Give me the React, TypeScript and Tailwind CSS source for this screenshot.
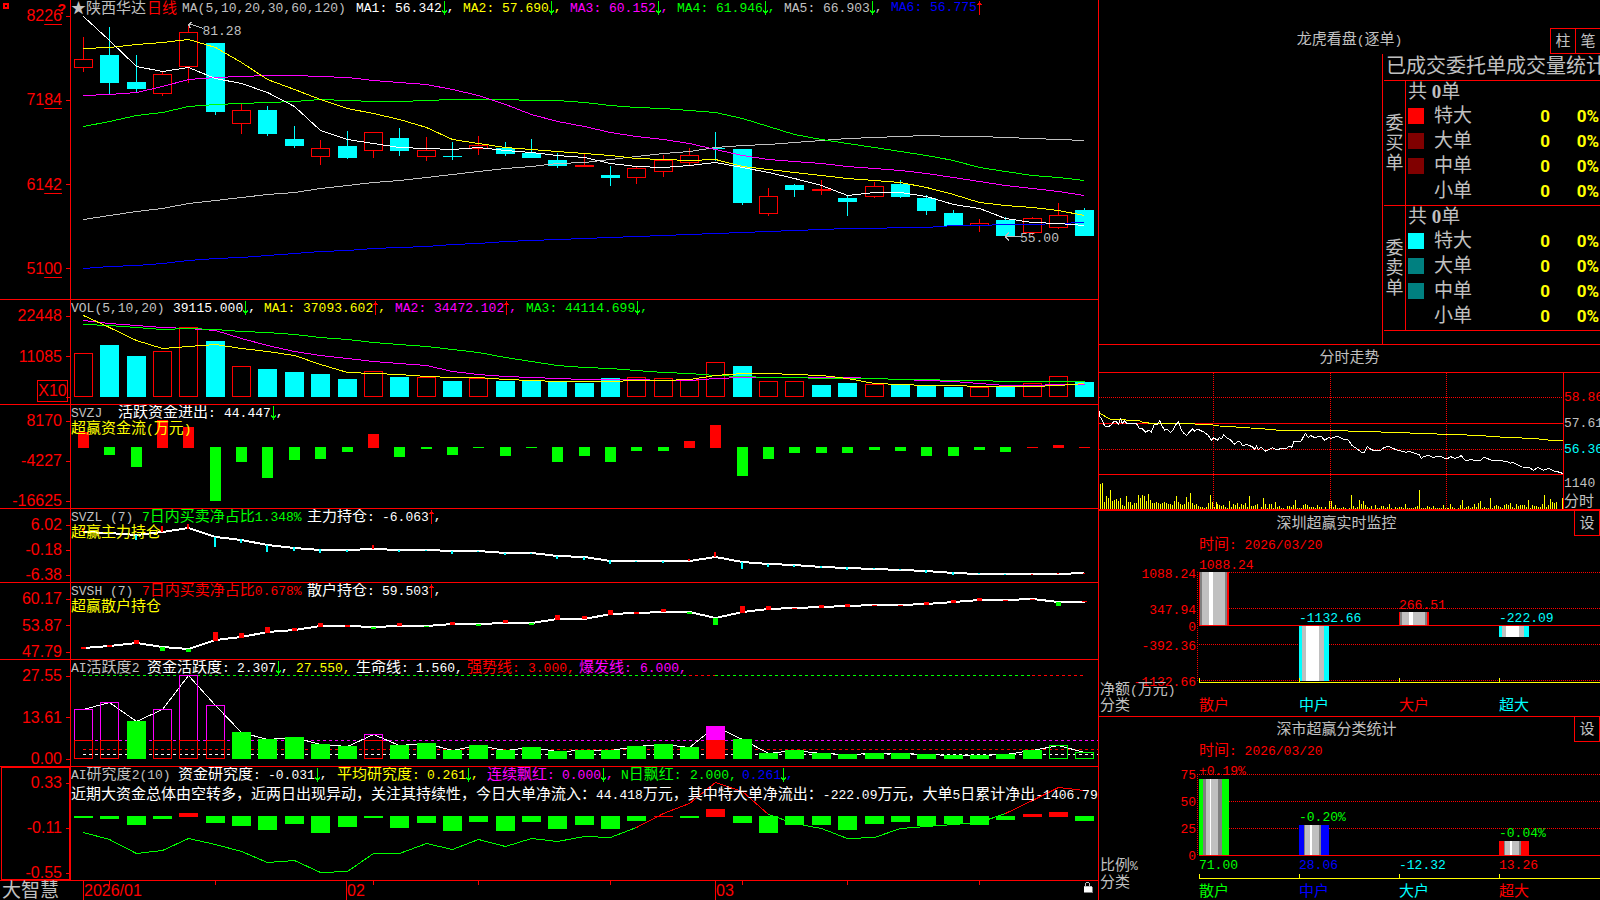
import React from 'react';

const RED = '#ff0000';
const CYAN = '#00ffff';
const GREEN = '#00ff00';
const YELLOW = '#ffff00';
const MAGENTA = '#ff00ff';
const BLUE = '#0000ff';
const GRAY = '#c0c0c0';
const WHITE = '#ffffff';

// r = up day (outlined), c = down day (filled)
type Candle = ['r' | 'c', number, number, number, number];

const candles: Candle[] = [
  ['r', 37, 59, 67, 71], ['c', 27, 55, 82, 93], ['c', 55, 82, 88, 91], ['r', 72, 74, 93, 95],
  ['r', 25, 32, 66, 82], ['c', 43, 43, 111, 114], ['r', 103, 110, 123, 133], ['c', 106, 110, 133, 135],
  ['c', 126, 139, 145, 147], ['r', 140, 148, 156, 164], ['c', 131, 146, 157, 158], ['r', 132, 132, 150, 157],
  ['c', 128, 138, 150, 155], ['r', 137, 150, 156, 160], ['c', 142, 156, 156, 159], ['r', 136, 145, 148, 154],
  ['c', 142, 148, 153, 155], ['c', 139, 153, 157, 157], ['c', 153, 160, 165, 167], ['r', 153, 165, 166, 166],
  ['c', 166, 175, 177, 185], ['r', 167, 168, 177, 183], ['r', 155, 160, 171, 176], ['r', 148, 155, 162, 164],
  ['c', 132, 148, 148, 160], ['c', 149, 149, 202, 204], ['r', 188, 196, 213, 215], ['c', 184, 185, 189, 196],
  ['r', 180, 189, 190, 194], ['c', 196, 198, 201, 215], ['r', 182, 186, 196, 197], ['c', 180, 184, 196, 197],
  ['c', 195, 198, 210, 214], ['c', 210, 213, 225, 225], ['r', 219, 223, 225, 231], ['c', 217, 220, 235, 235],
  ['r', 217, 218, 232, 234], ['r', 203, 215, 227, 228], ['c', 208, 210, 235, 235],
];

const priceLines: { color: string; ys: number[] }[] = [
  { color: BLUE, ys: [268, 266, 265, 263, 260, 258, 257, 255, 253, 251, 250, 248, 247, 246, 244, 243, 241, 240, 239, 238, 237, 236, 235, 234, 233, 232, 231, 230, 229, 228, 228, 227, 227, 225, 225, 224, 224, 223, 222] },
  { color: GRAY, ys: [219, 215, 211, 208, 203, 200, 197, 194, 192, 188, 185, 182, 180, 177, 174, 171, 168, 166, 163, 162, 159, 156, 153, 151, 147, 145, 144, 142, 140, 138, 137, 136, 135, 136, 136, 137, 138, 139, 140] },
  { color: GREEN, ys: [126, 121, 115, 112, 106, 104, 103, 102, 101, 99, 100, 101, 101, 100, 99, 99, 99, 100, 100, 102, 105, 107, 108, 110, 112, 118, 126, 134, 139, 143, 147, 151, 155, 160, 167, 171, 175, 177, 180] },
  { color: MAGENTA, ys: [95, 94, 92, 86, 79, 77, 76, 75, 75, 76, 77, 80, 82, 84, 89, 95, 104, 114, 121, 126, 132, 136, 139, 143, 149, 155, 159, 161, 163, 166, 168, 170, 173, 177, 181, 185, 188, 191, 195] },
  { color: YELLOW, ys: [48, 47, 44, 42, 39, 47, 62, 79, 89, 99, 108, 113, 119, 127, 139, 143, 147, 149, 151, 153, 155, 158, 159, 160, 159, 166, 169, 172, 175, 178, 180, 182, 187, 194, 202, 205, 207, 210, 215] },
  { color: WHITE, ys: [16, 40, 66, 71, 67, 78, 83, 92, 106, 130, 139, 143, 147, 148, 149, 147, 150, 152, 155, 157, 163, 166, 167, 165, 162, 167, 172, 178, 185, 195, 192, 192, 196, 204, 208, 218, 222, 223, 225] },
];

const volumes: [string, number][] = [
  ['r', 353], ['c', 345], ['c', 356], ['r', 351], ['r', 327], ['c', 341], ['r', 366], ['c', 369], ['c', 372], ['c', 374],
  ['c', 379], ['r', 371], ['c', 377], ['r', 377], ['c', 381], ['r', 378], ['c', 381], ['c', 380], ['c', 382], ['c', 383],
  ['c', 378], ['r', 377], ['r', 378], ['r', 380], ['r', 362], ['c', 366], ['r', 381], ['r', 381], ['c', 385], ['c', 383],
  ['r', 384], ['c', 385], ['c', 386], ['c', 387], ['r', 387], ['c', 387], ['r', 383], ['r', 376], ['c', 382],
];

const volumeLines: { color: string; ys: number[] }[] = [
  { color: MAGENTA, ys: [320, 323, 325, 327, 328, 330, 338, 345, 351, 355, 358, 361, 363, 365, 371, 374, 376, 377, 378, 379, 379, 379, 380, 380, 378, 377, 377, 377, 377, 377, 378, 379, 380, 381, 383, 385, 385, 384, 384] },
  { color: GREEN, ys: [324, 325, 327, 329, 328, 329, 331, 332, 334, 337, 339, 342, 344, 346, 349, 352, 357, 361, 365, 367, 368, 370, 372, 373, 375, 376, 377, 377, 378, 378, 378, 379, 379, 380, 380, 381, 381, 381, 381] },
  { color: YELLOW, ys: [315, 327, 340, 348, 346, 344, 348, 351, 355, 364, 372, 373, 374, 376, 377, 377, 379, 380, 381, 381, 381, 380, 380, 379, 375, 373, 373, 374, 375, 378, 383, 384, 385, 385, 386, 386, 386, 385, 383] },
];

// negative flow grows down to the given y, positive grows up
const flows: [string, number][] = [
  ['r', 432], ['g', 455], ['g', 467], ['r', 420], ['r', 427], ['g', 501], ['g', 462], ['g', 478], ['g', 460], ['g', 459],
  ['g', 452], ['r', 434], ['g', 457], ['g', 449], ['g', 455], ['g', 448], ['g', 456], ['g', 448], ['g', 462], ['g', 456],
  ['g', 462], ['g', 451], ['g', 451], ['r', 441], ['r', 425], ['g', 476], ['g', 459], ['g', 453], ['g', 453], ['g', 453],
  ['g', 450], ['g', 451], ['g', 456], ['g', 456], ['g', 450], ['g', 452], ['r', 447], ['r', 445], ['r', 447],
];

const mainHold = [532, 533, 535, 532, 528, 537, 540, 545, 548, 550, 550, 549, 550, 550, 551, 551, 553, 553, 556, 557, 561, 561, 561, 561, 557, 562, 564, 565, 567, 568, 569, 570, 571, 573, 574, 574, 574, 574, 573];
const mainMarks: [string, number, number][] = [
  ['r', 528, 532], ['c', 532, 534], ['c', 535, 540], ['r', 526, 532], ['r', 524, 529], ['c', 537, 547], ['c', 539, 543], ['c', 545, 552], ['c', 547, 551], ['c', 549, 553],
  ['c', 550, 552], ['r', 545, 549], ['c', 550, 552], ['c', 550, 551], ['c', 551, 554], ['c', 551, 552], ['c', 553, 555], ['c', 553, 554], ['c', 556, 559], ['c', 557, 560],
  ['c', 560, 564], ['c', 561, 562], ['c', 561, 563], ['r', 559, 561], ['r', 552, 557], ['c', 562, 569], ['c', 564, 567], ['c', 565, 567], ['c', 566, 568], ['c', 567, 570],
  ['c', 568, 569], ['c', 569, 570], ['c', 570, 573], ['c', 572, 575], ['c', 573, 574], ['c', 574, 575], ['r', 574, 575], ['r', 573, 574], ['r', 573, 574],
];

const retailHold = [648, 646, 643, 647, 649, 640, 637, 632, 630, 626, 626, 627, 626, 626, 624, 624, 623, 623, 619, 619, 614, 613, 612, 612, 618, 612, 609, 608, 607, 606, 605, 605, 604, 602, 600, 600, 599, 602, 602];
const retailMarks: [string, number, number][] = [
  ['r', 647, 649], ['r', 645, 647], ['r', 640, 644], ['g', 647, 651], ['g', 649, 652], ['r', 632, 641], ['r', 633, 638], ['r', 627, 633], ['r', 628, 631], ['r', 623, 627],
  ['r', 625, 627], ['g', 627, 629], ['r', 623, 626], ['g', 626, 627], ['r', 622, 625], ['g', 624, 626], ['r', 620, 623], ['g', 623, 625], ['r', 615, 620], ['r', 616, 619],
  ['r', 610, 615], ['r', 612, 614], ['r', 609, 612], ['g', 612, 614], ['g', 618, 625], ['r', 606, 613], ['r', 606, 610], ['r', 608, 609], ['r', 605, 608], ['r', 604, 607],
  ['r', 605, 606], ['r', 605, 606], ['r', 602, 605], ['r', 600, 603], ['r', 598, 601], ['r', 600, 601], ['r', 599, 600], ['g', 602, 606], ['r', 601, 602],
];

// m = burst bar, M = solid burst bar, g = normal, o = outlined
const activity: [string, number][] = [
  ['m', 709], ['m', 702], ['g', 721], ['m', 709], ['m', 675], ['m', 705], ['g', 732], ['g', 739], ['g', 737], ['g', 744],
  ['g', 746], ['m', 734], ['g', 745], ['g', 743], ['g', 750], ['g', 745], ['g', 750], ['g', 747], ['g', 751], ['g', 750],
  ['g', 750], ['g', 746], ['g', 744], ['g', 747], ['M', 726], ['g', 739], ['g', 753], ['g', 750], ['g', 753], ['g', 754],
  ['g', 753], ['g', 753], ['g', 754], ['g', 755], ['g', 755], ['g', 754], ['g', 750], ['o', 745], ['o', 752],
];

const research: [string, number][] = [
  ['g', 818], ['g', 819], ['g', 825], ['g', 819], ['r', 813], ['g', 823], ['g', 826], ['g', 830], ['g', 824], ['g', 833],
  ['g', 827], ['g', 818], ['g', 828], ['g', 823], ['g', 831], ['g', 822], ['g', 831], ['g', 822], ['g', 829], ['g', 825],
  ['g', 829], ['g', 821], ['r', 816], ['g', 818], ['r', 809], ['g', 823], ['g', 833], ['g', 825], ['g', 825], ['g', 830],
  ['g', 824], ['g', 822], ['g', 826], ['g', 824], ['g', 825], ['g', 820], ['r', 814], ['r', 812], ['g', 821],
];
const researchLine = [832, 839, 853, 850, 838, 844, 851, 862, 860, 872, 871, 853, 853, 843, 849, 839, 846, 838, 841, 836, 837, 827, 813, 803, 782, 791, 814, 823, 828, 838, 837, 828, 826, 824, 822, 813, 800, 787, 790];

// intraday series, measured in thirds of a pixel
const minutePrice = [
  9, 124, 12, 140, 18, 150, 26, 168, 38, 170, 45, 165, 52, 156, 60, 155, 68, 162, 73, 146, 79, 160, 85, 152, 92, 160, 122, 162, 130, 175, 140, 177, 149, 187,
  158, 181, 166, 186, 175, 163, 184, 163, 191, 152, 198, 168, 206, 180, 212, 177, 223, 187, 230, 182, 238, 166, 248, 156, 256, 180, 264, 190, 272, 196, 282, 184,
  290, 176, 296, 184, 304, 177, 325, 187, 336, 195, 346, 210, 353, 203, 364, 211, 370, 203, 377, 206, 383, 194, 392, 203, 402, 208, 415, 223, 425, 214, 432, 215,
  440, 227, 452, 223, 468, 230, 476, 238, 481, 228, 487, 238, 496, 232, 509, 244, 530, 233, 540, 238, 572, 235, 580, 228, 587, 232, 594, 214, 615, 214, 628, 190,
  637, 203, 644, 197, 655, 202, 676, 199, 686, 211, 697, 203, 705, 205, 714, 202, 726, 199, 742, 208, 757, 210, 768, 226, 797, 247, 805, 247, 814, 229, 822, 236,
  835, 243, 854, 241, 864, 233, 878, 229, 902, 240, 930, 247, 940, 244, 970, 254, 976, 265, 985, 259, 997, 256, 1009, 262, 1034, 259, 1047, 266, 1056, 265,
  1064, 260, 1076, 265, 1088, 262, 1096, 256, 1102, 266, 1110, 272, 1127, 268, 1134, 271, 1152, 273, 1163, 262, 1186, 270, 1232, 274, 1243, 280, 1249, 277,
  1279, 291, 1299, 292, 1313, 301, 1326, 292, 1342, 301, 1359, 295, 1374, 303, 1392, 307, 1401, 311,
];
const minuteAverage = [
  9, 127, 20, 135, 44, 148, 90, 150, 128, 152, 142, 157, 165, 160, 262, 160, 350, 165, 370, 168, 420, 171, 506, 177, 550, 181, 708, 181, 801, 185, 907, 187,
  974, 191, 1072, 193, 1154, 197, 1212, 201, 1278, 204, 1329, 207, 1364, 211, 1401, 212,
];
const minuteVolume = [
  25, 26, 7, 13, 11, 19, 8, 9, 10, 8, 11, 4, 3, 13, 7, 7, 4, 6, 6, 14, 11, 14, 13, 8, 15, 9, 6, 6, 7, 6, 5, 6, 7, 6, 5, 5, 4, 8, 13, 7, 5, 4, 5, 12, 7, 16, 6, 4, 5, 3,
  2, 2, 1, 2, 6, 14, 7, 2, 7, 5, 4, 3, 4, 2, 1, 8, 2, 5, 4, 6, 2, 5, 4, 6, 2, 13, 3, 3, 4, 5, 0, 2, 11, 5, 1, 5, 5, 1, 7, 2, 3, 1, 1, 0, 3, 3, 2, 4, 9, 1, 1, 1, 4, 5, 4,
  2, 2, 2, 1, 4, 2, 2, 0, 2, 0, 8, 8, 2, 4, 1, 1, 1, 2, 1, 0, 1, 14, 3, 1, 2, 9, 5, 8, 4, 2, 1, 3, 0, 4, 1, 1, 3, 3, 1, 2, 5, 1, 0, 2, 1, 2, 2, 1, 5, 1, 1, 1, 1, 2, 3,
  19, 1, 1, 1, 3, 2, 1, 3, 1, 1, 1, 1, 4, 1, 1, 1, 5, 2, 1, 0, 1, 4, 9, 1, 2, 3, 1, 2, 5, 2, 6, 8, 1, 2, 1, 1, 11, 1, 3, 4, 3, 2, 1, 4, 5, 4, 6, 2, 1, 5, 3, 4, 4, 4,
  2, 9, 1, 4, 3, 3, 2, 2, 5, 14, 2, 4, 10, 7, 6, 7, 0, 0, 11,
];

const cx = (i: number) => Math.round(83 + i * 26.35);

const barColor = (kind: string) => (kind === 'r' ? RED : kind === 'c' ? CYAN : GREEN);

// Lienzo de cada indicador: comparte el eje x con los demás
const Plot: React.FC<{ top: number; height: number; children: React.ReactNode }> = ({ top, height, children }) => (
  <svg
    className="absolute inset-0 h-full w-full"
    viewBox={`71 ${top} 1027 ${height}`}
    preserveAspectRatio="none"
    shapeRendering="crispEdges"
    aria-hidden="true"
  >
    {children}
  </svg>
);

const Series: React.FC<{ ys: number[]; color: string; from?: number; width?: number }> = ({ ys, color, from = 0, width = 1 }) => (
  <polyline
    points={ys.map((y, i) => `${cx(i + from) + 0.5},${y + (width === 1 ? 0.5 : 0)}`).join(' ')}
    fill="none"
    stroke={color}
    strokeWidth={width}
  />
);

const Box: React.FC<{ i: number; top: number; bottom: number; color: string; solid?: boolean }> = ({ i, top, bottom, color, solid }) =>
  solid ? (
    <rect x={cx(i) - 9} y={top} width={19} height={Math.max(1, bottom - top)} fill={color} />
  ) : (
    <rect x={cx(i) - 8.5} y={top + 0.5} width={18} height={Math.max(1, bottom - top - 1)} fill="none" stroke={color} />
  );

const Arrow: React.FC<{ up?: boolean }> = ({ up }) => (
  <svg className="h-[14px] w-[5px] shrink-0" viewBox="0 0 5 14" shapeRendering="crispEdges" aria-hidden="true">
    <path
      d={up ? 'M2 0h1v14h-1zM1 2h3v1h-3zM0 3h5v1h-5z' : 'M2 0h1v14h-1zM0 9h1v1h3v-1h1v2h-1v1h-3v-1h-1z'}
      fill={up ? RED : GREEN}
    />
  </svg>
);

// Las cifras y letras latinas van en monoespaciada, el resto en la fuente china
const Mixed: React.FC<{ text: string }> = ({ text }) => (
  <>
    {text.split(/([\x20-\x7e]+)/).map((part, i) =>
      i % 2 === 1 ? (
        <span key={i} className="whitespace-pre font-['Liberation_Mono'] text-[13px]">
          {part}
        </span>
      ) : (
        part
      ),
    )}
  </>
);

interface LegendItem {
  text: string;
  className: string;
  arrow?: 'up' | 'down';
}

const Legend: React.FC<{ items: LegendItem[] }> = ({ items }) => (
  <div className="flex h-[16px] items-center whitespace-nowrap text-[15px] leading-[16px]">
    {items.map((item) => (
      <div key={item.text} className={`flex shrink-0 items-center ${item.className}`}>
        <span>
          <Mixed text={item.text} />
        </span>
        {item.arrow && (
          <>
            <Arrow up={item.arrow === 'up'} />
            <Mixed text="," />
          </>
        )}
      </div>
    ))}
  </div>
);

interface PanelProps {
  labels: React.ReactNode[];
  gutterClass?: string;
  extra?: React.ReactNode;
  children: React.ReactNode;
}

const Panel: React.FC<PanelProps> = ({ labels, gutterClass = 'pb-0', extra, children }) => (
  <section className="flex min-h-0 border-b border-[#ff0000]">
    <div className={`relative flex w-[71px] shrink-0 flex-col justify-between border-r border-[#ff0000] pt-[9px] font-['Liberation_Sans'] text-[16px] leading-[14px] text-[#ff0000] ${gutterClass}`}>
      {labels.map((label, i) => (
        <div key={i} className="flex h-[14px] items-center justify-end gap-1">
          <span>{label}</span>
          <span className="h-px w-1 bg-[#ff0000]" />
        </div>
      ))}
      {extra}
    </div>
    <div className="relative min-w-0 flex-1 overflow-hidden">{children}</div>
  </section>
);

const Price: React.FC<{ value: string }> = ({ value }) => (
  <>
    {value.slice(0, 2)}
    <span className="underline decoration-1 underline-offset-[3px]">{value.slice(2)}</span>
  </>
);

const PricePanel = () => (
  <Panel
    gutterClass="pb-[23px]"
    labels={['8226', '7184', '6142', '5100'].map((v) => <Price key={v} value={v} />)}
    extra={
      <>
        <span className="absolute left-[3px] top-[3px] h-[6px] w-[6px] border-2 border-[#ff0000]" />
        <span className="absolute right-[4px] top-[2px] text-[14px] font-bold">?</span>
      </>
    }
  >
    <Plot top={0} height={299}>
      {candles.map(([kind, high, top, bottom, low], i) => (
        <g key={i}>
          <rect x={cx(i)} y={high} width={1} height={top - high} fill={barColor(kind)} />
          <rect x={cx(i)} y={bottom} width={1} height={low - bottom + 1} fill={barColor(kind)} />
          <Box i={i} top={top} bottom={bottom + 1} color={barColor(kind)} solid={kind === 'c'} />
        </g>
      ))}
      {priceLines.map((line) => (
        <Series key={line.color} ys={line.ys} color={line.color} />
      ))}
      <path d="M189 24.5h3l11 4M188.5 24.5l4-3M188.5 24.5l2 4M1005.5 236.5h15M1005 236.5l4-4M1005 236.5l4 4" fill="none" stroke={GRAY} />
    </Plot>
    <span className="absolute left-[12.8%] top-[7.1%] text-[15px] leading-[18px] text-[#c0c0c0]">
      <Mixed text="81.28" />
    </span>
    <span className="absolute left-[92.4%] top-[76.3%] text-[15px] leading-[18px] text-[#c0c0c0]">
      <Mixed text="55.00" />
    </span>
    <div className="relative">
      <Legend
        items={[
          { text: '★陕西华达', className: 'w-[76px] text-[#c0c0c0]' },
          { text: '日线', className: 'w-[35px] text-[#ff0000]' },
          { text: 'MA(5,10,20,30,60,120)', className: 'w-[174px] text-[#c0c0c0]' },
          { text: 'MA1: 56.342', className: 'w-[107px] text-white', arrow: 'down' },
          { text: 'MA2: 57.690', className: 'w-[107px] text-[#ffff00]', arrow: 'down' },
          { text: 'MA3: 60.152', className: 'w-[107px] text-[#ff00ff]', arrow: 'down' },
          { text: 'MA4: 61.946', className: 'w-[107px] text-[#00ff00]', arrow: 'down' },
          { text: 'MA5: 66.903', className: 'w-[107px] text-[#c0c0c0]', arrow: 'down' },
        ]}
      />
      <div className="absolute left-[820px] top-0 flex h-[16px] items-center text-[15px] leading-[16px] text-[#0000ff]">
        <Mixed text="MA6: 56.775" />
        <Arrow up />
      </div>
    </div>
  </Panel>
);

const VolumePanel = () => (
  <Panel
    labels={['22448', '11085', '']}
    extra={
      <span className="absolute bottom-[2px] right-[2px] flex h-[22px] w-[31px] items-center justify-center border border-[#ff0000]">X10</span>
    }
  >
    <Plot top={300} height={104}>
      {volumes.map(([kind, top], i) => (
        <Box key={i} i={i} top={top} bottom={397} color={barColor(kind)} solid={kind === 'c'} />
      ))}
      {volumeLines.map((line) => (
        <Series key={line.color} ys={line.ys} color={line.color} />
      ))}
    </Plot>
    <div className="relative">
      <Legend
        items={[
          { text: 'VOL(5,10,20)', className: 'w-[102px] text-[#c0c0c0]' },
          { text: '39115.000', className: 'w-[91px] text-white', arrow: 'down' },
          { text: 'MA1: 37093.602', className: 'w-[131px] text-[#ffff00]', arrow: 'up' },
          { text: 'MA2: 34472.102', className: 'w-[131px] text-[#ff00ff]', arrow: 'up' },
          { text: 'MA3: 44114.699', className: 'text-[#00ff00]', arrow: 'down' },
        ]}
      />
    </div>
  </Panel>
);

const FlowPanel = () => (
  <Panel labels={['8170', '-4227', '-16625']}>
    <Plot top={405} height={103}>
      {flows.map(([kind, y], i) => (
        <rect
          key={i}
          x={cx(i) - 5}
          y={kind === 'r' ? y : 447}
          width={11}
          height={kind === 'r' ? 448 - y : y - 447}
          fill={barColor(kind)}
        />
      ))}
    </Plot>
    <div className="relative">
      <Legend
        items={[
          { text: 'SVZJ', className: 'w-[47px] text-[#c0c0c0]' },
          { text: '活跃资金进出:', className: 'w-[106px] text-white' },
          { text: '44.447', className: 'text-white', arrow: 'down' },
        ]}
      />
      <p className="text-[15px] leading-[15px] text-[#ffff00]">
        <Mixed text="超赢资金流(万元)" />
      </p>
    </div>
  </Panel>
);

const MainHoldPanel = () => (
  <Panel labels={['6.02', '-0.18', '-6.38']}>
    <Plot top={509} height={73}>
      <Series ys={mainHold} color={WHITE} width={2} />
      {mainMarks.map(([kind, top, bottom], i) => (
        <rect key={i} x={cx(i) - 1} y={top} width={2} height={bottom - top} fill={barColor(kind)} />
      ))}
    </Plot>
    <div className="relative">
      <Legend
        items={[
          { text: 'SVZL (7)', className: 'w-[71px] text-[#c0c0c0]' },
          { text: '7日内买卖净占比1.348%', className: 'w-[165px] text-[#00ff00]' },
          { text: '主力持仓:', className: 'w-[75px] text-white' },
          { text: '-6.063', className: 'text-white', arrow: 'up' },
        ]}
      />
      <p className="text-[15px] leading-[15px] text-[#ffff00]">超赢主力持仓</p>
    </div>
  </Panel>
);

const RetailHoldPanel = () => (
  <Panel labels={['60.17', '53.87', '47.79']}>
    <Plot top={583} height={76}>
      <Series ys={retailHold} color={WHITE} width={2} />
      {retailMarks.map(([kind, top, bottom], i) => (
        <rect key={i} x={cx(i) - 2} y={top} width={5} height={bottom - top} fill={barColor(kind)} />
      ))}
    </Plot>
    <div className="relative">
      <Legend
        items={[
          { text: 'SVSH (7)', className: 'w-[71px] text-[#c0c0c0]' },
          { text: '7日内买卖净占比0.678%', className: 'w-[165px] text-[#ff0000]' },
          { text: '散户持仓:', className: 'w-[75px] text-white' },
          { text: '59.503', className: 'text-white', arrow: 'up' },
        ]}
      />
      <p className="text-[15px] leading-[15px] text-[#ffff00]">超赢散户持仓</p>
    </div>
  </Panel>
);

const ActivityPanel = () => (
  <Panel labels={['27.55', '13.61', '0.00']}>
    <Plot top={660} height={106}>
      <g fill="none" strokeDasharray="3 3">
        <path d="M83 675.5H686" stroke={GREEN} />
        <path d="M689 675.5H715" stroke={RED} />
        <path d="M715 675.5H1032" stroke={GREEN} />
        <path d="M1032 675.5H1084" stroke={RED} />
        <path d="M83 740.5H1098" stroke={MAGENTA} />
        <path d="M83 749.5H1098" stroke={RED} />
        <path d="M83 754.5H1098" stroke={WHITE} />
      </g>
      <Series ys={activity.map(([, top]) => top)} color={WHITE} />
      {activity.map(([kind, top], i) => {
        if (kind === 'm' || kind === 'M') {
          const solid = kind === 'M';
          return (
            <g key={i}>
              <Box i={i} top={top} bottom={741} color={MAGENTA} solid={solid} />
              <Box i={i} top={740} bottom={759} color={RED} solid={solid} />
            </g>
          );
        }
        return <Box key={i} i={i} top={top} bottom={759} color={GREEN} solid={kind === 'g'} />;
      })}
    </Plot>
    <div className="relative">
      <Legend
        items={[
          { text: 'AI活跃度2', className: 'w-[76px] text-[#c0c0c0]' },
          { text: '资金活跃度:', className: 'w-[90px] text-white' },
          { text: '2.307', className: 'w-[59px] text-white', arrow: 'down' },
          { text: '27.550,', className: 'w-[60px] text-[#ffff00]' },
          { text: '生命线:', className: 'w-[60px] text-white' },
          { text: '1.560,', className: 'w-[51px] text-white' },
          { text: '强势线:', className: 'w-[61px] text-[#ff0000]' },
          { text: '3.000,', className: 'w-[51px] text-[#ff0000]' },
          { text: '爆发线:', className: 'w-[61px] text-[#ff00ff]' },
          { text: '6.000,', className: 'text-[#ff00ff]' },
        ]}
      />
    </div>
  </Panel>
);

const ResearchPanel = () => (
  <Panel
    labels={['0.33', '-0.11', '-0.55']}
    extra={<span className="absolute inset-y-0 left-px right-0 border border-[#ff0000]" />}
  >
    <Plot top={767} height={113}>
      {research.map(([kind, y], i) => (
        <Box
          key={i}
          i={i}
          top={kind === 'r' ? y : 816}
          bottom={kind === 'r' ? 817 : y}
          color={barColor(kind)}
          solid
        />
      ))}
      <Series ys={researchLine.slice(0, 22)} color={GREEN} />
      <Series ys={researchLine.slice(21, 27)} from={21} color={RED} />
      <Series ys={researchLine.slice(26, 36)} from={26} color={GREEN} />
      <Series ys={researchLine.slice(35)} from={35} color={RED} />
    </Plot>
    <div className="relative">
      <Legend
        items={[
          { text: 'AI研究度2(10)', className: 'w-[107px] text-[#c0c0c0]' },
          { text: '资金研究度:', className: 'w-[90px] text-white' },
          { text: '-0.031', className: 'w-[69px] text-white', arrow: 'down' },
          { text: '平均研究度:', className: 'w-[90px] text-[#ffff00]' },
          { text: '0.261', className: 'w-[60px] text-[#ffff00]', arrow: 'down' },
          { text: '连续飘红:', className: 'w-[75px] text-[#ff00ff]' },
          { text: '0.000', className: 'w-[59px] text-[#ff00ff]', arrow: 'down' },
          { text: 'N日飘红:', className: 'w-[69px] text-[#00ff00]' },
          { text: '2.000,', className: 'w-[52px] text-[#00ff00]' },
          { text: '0.261', className: 'text-[#0000ff]', arrow: 'down' },
        ]}
      />
      <p className="whitespace-nowrap pt-[2px] text-[15px] leading-[18px] text-white">
        <Mixed text="近期大资金总体由空转多，近两日出现异动，关注其持续性，今日大单净流入：44.418万元，其中特大单净流出：-222.09万元，大单5日累计净出-1406.79" />
      </p>
    </div>
  </Panel>
);

const TimeAxis = () => (
  <footer className="flex min-h-0 text-[#ff0000]">
    <div className="w-[71px] shrink-0 whitespace-nowrap pl-[2px] text-[19px] leading-[19px] text-[#c0c0c0]">大智慧</div>
    <div className="relative min-w-0 flex-1">
      <Plot top={881} height={19}>
        {[1, 5, 11, 15, 20, 25, 29, 34].map((i) => (
          <rect key={i} x={cx(i)} y={881} width={1} height={4} fill={RED} />
        ))}
      </Plot>
      <div className="grid h-full grid-cols-[12fr_263fr_369fr_383fr] font-['Liberation_Sans'] text-[16px] leading-[19px]">
        <span />
        <span className="border-l border-[#ff0000]">2026/01</span>
        <span className="border-l border-[#ff0000]">02</span>
        <span className="border-l border-[#ff0000]">03</span>
      </div>
      <svg className="absolute right-1 top-[1px] h-[12px] w-[11px]" viewBox="0 0 11 12" shapeRendering="crispEdges" role="img" aria-label="locked">
        <path d="M3 0h3v1h1v3h-1v-3h-3v3h-1v-3h1z" fill={GRAY} />
        <path d="M1 4h8v6h-8z" fill={WHITE} />
        <path d="M1 4h8v1h-8z" fill={GRAY} />
        <path d="M1 10h8v-5h1v6h-9z" fill="#808080" />
      </svg>
    </div>
  </footer>
);

const orderRows = ['特大', '大单', '中单', '小单'];

const OrderSide: React.FC<{ name: string; swatches: string[] }> = ({ name, swatches }) => (
  <div className="ml-px flex h-[125px] items-start border-t border-[#ff0000]">
    <div className="flex h-full w-[22px] items-center justify-center border-r border-[#ff0000]">
      <span className="w-[20px] break-all text-center text-[18px] leading-[20px]">{name}</span>
    </div>
    <table className="flex-1 border-collapse text-[19px] leading-[22px]">
      <tbody>
        <tr className="h-[22px]">
          <td colSpan={4} className="p-0 pl-[2px]">
            共 <b>0</b>单
          </td>
        </tr>
        {orderRows.map((row, i) => (
          <tr key={row} className="h-[25px]">
            <td className="w-[28px] p-0 pl-[2px]">
              <div className={`h-4 w-4 ${swatches[i]}`} />
            </td>
            <td className="p-0">{row}</td>
            <td className="p-0 text-right font-['Roboto'] text-[17px] font-bold text-[#ffff00]">0</td>
            <td className="w-[50px] p-0 pr-px text-right font-['Roboto'] text-[17px] font-bold text-[#ffff00]">0%</td>
          </tr>
        ))}
      </tbody>
    </table>
  </div>
);

const OrderPanel = () => (
  <section className="flex min-h-0 flex-col overflow-hidden border-b border-[#ff0000]">
    <div className="relative flex h-[54px] shrink-0 items-end justify-center pb-[2px] text-[15px]">
      <h2 className="leading-[22px]">
        <Mixed text="龙虎看盘(逐单)" />
      </h2>
      <div className="absolute bottom-0 right-0 flex border border-r-0 border-[#ff0000]">
        <button className="h-6 w-6 leading-6">柱</button>
        <button className="h-6 w-[25px] border-l border-[#ff0000] leading-6">笔</button>
      </div>
    </div>
    <div className="ml-auto w-[218px] flex-1 border-l border-[#ff0000]">
      <h3 className="h-[26px] overflow-hidden whitespace-nowrap pl-[3px] text-[20px] leading-[24px]">已成交委托单成交量统计</h3>
      <OrderSide name="委买单" swatches={['bg-[#ff0000]', 'bg-[#800000]', 'bg-[#800000]', 'bg-black']} />
      <OrderSide name="委卖单" swatches={['bg-[#00ffff]', 'bg-[#008080]', 'bg-[#008080]', 'bg-black']} />
      <div className="ml-px border-t border-[#ff0000]" />
    </div>
  </section>
);

const toPoints = (flat: number[]) => {
  const out: string[] = [];
  for (let i = 0; i < flat.length; i += 2) {
    out.push(`${flat[i] / 3 - 3},${flat[i + 1] / 3 - 3}`);
  }
  return out.join(' ');
};

const MinutePanel = () => (
  <section className="flex min-h-0 flex-col border-b border-[#ff0000]">
    <h2 className="h-[27px] shrink-0 text-center text-[15px] leading-[25px]">分时走势</h2>
    <div className="flex min-h-0 flex-1 overflow-hidden border-y border-[#ff0000]">
      <div className="relative min-w-0 flex-1 border-r border-[#ff0000]">
        <svg className="absolute inset-0 h-full w-full" viewBox="0 0 464 136" preserveAspectRatio="none" shapeRendering="crispEdges" aria-hidden="true">
          <g stroke={RED} strokeDasharray="1 1" fill="none">
            <path d="M0 24.5H464M0 76.5H464M114.5 0V136M231.5 0V136M347.5 0V136" />
          </g>
          <path d="M0 50.5H464M0 101.5H464" stroke={RED} />
          <polyline points={toPoints(minuteAverage)} fill="none" stroke={YELLOW} />
          <polyline points={toPoints(minutePrice)} fill="none" stroke={WHITE} />
          {minuteVolume.map((h, i) => (
            <rect key={i} x={1 + i * (462 / (minuteVolume.length - 1))} y={136 - h} width={1} height={h} fill={YELLOW} />
          ))}
        </svg>
      </div>
      <div className="w-[36px] shrink-0 whitespace-nowrap pt-[16px] font-['Liberation_Mono'] text-[13px] leading-[17px]">
        <div className="pb-[9px] text-[#ff0000]">58.86</div>
        <div className="pb-[9px]">57.61</div>
        <div className="pb-[17px] text-[#00ffff]">56.36</div>
        <div>1140</div>
        <div className="font-['Noto_Sans_CJK_SC'] text-[15px] leading-[15px]">分时</div>
      </div>
    </div>
  </section>
);

// [offset, width, colour] stripes of a cylinder-like bar
type Stripe = [number, number, string];

const cylinder: Stripe[] = [[1, 2, '#808080'], [3, 7, GRAY], [10, 4, WHITE], [14, 12, GRAY], [26, 2, '#808080']];
const cylinderLight: Stripe[] = [[3, 4, GRAY], [7, 13, WHITE], [20, 5, GRAY]];
const cylinderWide: Stripe[] = [[4, 3, '#808080'], [7, 4, GRAY], [11, 1, WHITE], [12, 7, GRAY], [19, 4, '#808080']];
const cylinderSide: Stripe[] = [[5, 1, '#808080'], [6, 5, GRAY], [11, 2, WHITE], [13, 7, GRAY], [20, 2, '#808080']];

const Cylinder: React.FC<{ x: number; top: number; bottom: number; color: string; stripes: Stripe[] }> = ({ x, top, bottom, color, stripes }) => (
  <g>
    <rect x={x} y={top} width={30} height={bottom - top} fill={color} />
    {stripes.map(([dx, w, fill]) => (
      <rect key={dx} x={x + dx} y={top} width={w} height={bottom - top} fill={fill} />
    ))}
  </g>
);

const BoardHeader: React.FC<{ title: string }> = ({ title }) => (
  <>
    <div className="flex h-[25px] items-start">
      <h2 className="flex-1 text-center text-[15px] leading-[25px]">{title}</h2>
      <button className="h-[25px] w-[26px] border border-t-0 border-[#ff0000] text-[15px] leading-[22px]">设</button>
    </div>
    <p className="h-4 pl-[100px] text-[15px] leading-4 text-[#ff0000]">
      <Mixed text="时间: 2026/03/20" />
    </p>
  </>
);

const MonitorBoard = () => (
  <section className="min-h-0 overflow-hidden border-b border-[#ff0000]">
    <BoardHeader title="深圳超赢实时监控" />
    <svg className="block h-[163px] w-full font-['Liberation_Mono','Noto_Sans_CJK_SC',monospace]" shapeRendering="crispEdges" fontSize="13" role="img" aria-label="深圳超赢实时监控">
      <g stroke={RED} strokeDasharray="1 1">
        <path d="M98.5 20V129M100 20.5H700M100 56.5H700M100 92.5H700M100 128.5H700" />
      </g>
      <path d="M100 73.5H700" stroke={RED} />
      <Cylinder x={100} top={20} bottom={73} color={RED} stripes={cylinder} />
      <Cylinder x={200} top={74} bottom={129} color={CYAN} stripes={cylinderLight} />
      <Cylinder x={300} top={60} bottom={73} color={RED} stripes={cylinder} />
      <Cylinder x={400} top={74} bottom={85} color={CYAN} stripes={cylinderLight} />
      <path d="M100.5 126V130.5H700M200.5 126V130M300.5 126V130M400.5 126V130" fill="none" stroke={YELLOW} />
      <g fill={RED} textAnchor="end">
        <text x="97" y="26">1088.24</text>
        <text x="97" y="62">347.94</text>
        <text x="97" y="79">0</text>
        <text x="97" y="98">-392.36</text>
        <text x="97" y="134">-1132.66</text>
      </g>
      <text x="100" y="17" fill={RED}>1088.24</text>
      <text x="200" y="70" fill={CYAN}>-1132.66</text>
      <text x="300" y="57" fill={RED}>266.51</text>
      <text x="400" y="70" fill={CYAN}>-222.09</text>
      <g fontSize="15">
        <text x="1" y="142" fill={GRAY}>净额<tspan fontSize="13">(</tspan>万元<tspan fontSize="13">)</tspan></text>
        <text x="1" y="158" fill={GRAY}>分类</text>
        <text x="100" y="158" fill={RED}>散户</text>
        <text x="200" y="158" fill={CYAN}>中户</text>
        <text x="300" y="158" fill={RED}>大户</text>
        <text x="400" y="158" fill={CYAN}>超大</text>
      </g>
    </svg>
  </section>
);

const CategoryBoard = () => (
  <section className="min-h-0 overflow-hidden">
    <BoardHeader title="深市超赢分类统计" />
    <svg className="block h-[141px] w-full font-['Liberation_Mono','Noto_Sans_CJK_SC',monospace]" shapeRendering="crispEdges" fontSize="13" role="img" aria-label="深市超赢分类统计">
      <g stroke={RED} strokeDasharray="1 1">
        <path d="M98.5 16V97M100 16.5H700M100 43.5H700M100 70.5H700" />
      </g>
      <path d="M100 97.5H700" stroke={RED} />
      <Cylinder x={100} top={21} bottom={97} color={GREEN} stripes={cylinderWide} />
      <Cylinder x={200} top={67} bottom={97} color={BLUE} stripes={cylinderSide} />
      <Cylinder x={400} top={83} bottom={97} color={RED} stripes={cylinderSide} />
      <path d="M100.5 116V120.5H700M200.5 116V120M300.5 116V120M400.5 116V120" fill="none" stroke={YELLOW} />
      <g fill={RED} textAnchor="end">
        <text x="97" y="21">75</text>
        <text x="97" y="48">50</text>
        <text x="97" y="75">25</text>
        <text x="97" y="102">0</text>
      </g>
      <text x="100" y="17" fill={RED}>+0.19%</text>
      <text x="200" y="63" fill={GREEN}>-0.20%</text>
      <text x="400" y="79" fill={GREEN}>-0.04%</text>
      <text x="100" y="111" fill={GREEN}>71.00</text>
      <text x="200" y="111" fill={BLUE}>28.06</text>
      <text x="300" y="111" fill={CYAN}>-12.32</text>
      <text x="400" y="111" fill={RED}>13.26</text>
      <g fontSize="15">
        <text x="1" y="112" fill={GRAY}>比例<tspan fontSize="13">%</tspan></text>
        <text x="1" y="129" fill={GRAY}>分类</text>
        <text x="100" y="138" fill={GREEN}>散户</text>
        <text x="200" y="138" fill={BLUE}>中户</text>
        <text x="300" y="138" fill={CYAN}>大户</text>
        <text x="400" y="138" fill={RED}>超大</text>
      </g>
    </svg>
  </section>
);

const App: React.FC = () => {
  return (
    <div className="flex h-screen overflow-hidden bg-black font-['Liberation_Serif','Noto_Sans_CJK_SC',serif] text-[#c0c0c0]">
      {/* Indicadores */}
      <main className="grid min-w-0 flex-1 grid-rows-[300fr_105fr_104fr_74fr_77fr_107fr_114fr_19fr]">
        <PricePanel />
        <VolumePanel />
        <FlowPanel />
        <MainHoldPanel />
        <RetailHoldPanel />
        <ActivityPanel />
        <ResearchPanel />
        <TimeAxis />
      </main>

      {/* Panel derecho */}
      <aside className="grid w-[502px] shrink-0 grid-rows-[345fr_166fr_206fr_183fr] border-l border-[#ff0000]">
        <OrderPanel />
        <MinutePanel />
        <MonitorBoard />
        <CategoryBoard />
      </aside>
    </div>
  );
};

export default App;
